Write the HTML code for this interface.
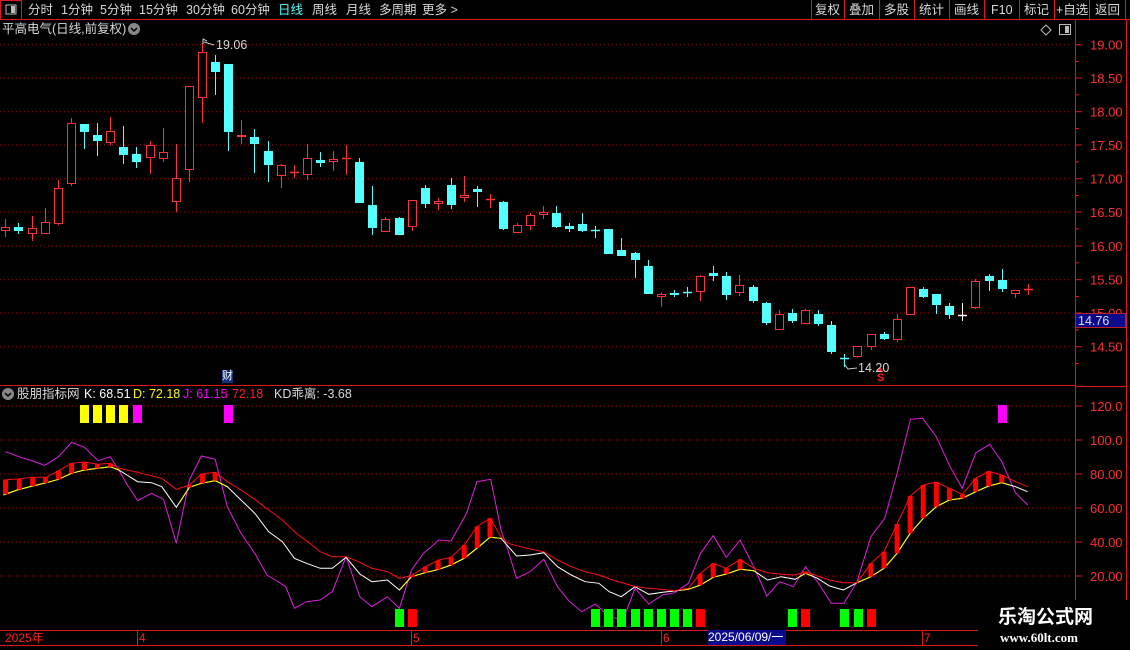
<!DOCTYPE html>
<html><head><meta charset="utf-8">
<style>
html,body{margin:0;padding:0;background:#000;}
body{width:1130px;height:650px;overflow:hidden;position:relative;font-family:"Liberation Sans","Noto Sans CJK SC",sans-serif;}
.t{position:absolute;white-space:nowrap;font-size:12.5px;line-height:14px;}
</style></head>
<body>
<svg id="s" width="1130" height="650" style="position:absolute;left:0;top:0" xmlns="http://www.w3.org/2000/svg"></svg>
<div class="t" style="left:28px;top:3px;color:#d8d8d8">分时</div>
<div class="t" style="left:61px;top:3px;color:#d8d8d8">1分钟</div>
<div class="t" style="left:100px;top:3px;color:#d8d8d8">5分钟</div>
<div class="t" style="left:139px;top:3px;color:#d8d8d8">15分钟</div>
<div class="t" style="left:186px;top:3px;color:#d8d8d8">30分钟</div>
<div class="t" style="left:231px;top:3px;color:#d8d8d8">60分钟</div>
<div class="t" style="left:278px;top:3px;color:#54ffff">日线</div>
<div class="t" style="left:312px;top:3px;color:#d8d8d8">周线</div>
<div class="t" style="left:346px;top:3px;color:#d8d8d8">月线</div>
<div class="t" style="left:379px;top:3px;color:#d8d8d8">多周期</div>
<div class="t" style="left:422px;top:3px;color:#d8d8d8">更多 &gt;</div>
<div class="t" style="left:815px;top:3px;color:#d8d8d8">复权</div>
<div class="t" style="left:849px;top:3px;color:#d8d8d8">叠加</div>
<div class="t" style="left:884px;top:3px;color:#d8d8d8">多股</div>
<div class="t" style="left:919px;top:3px;color:#d8d8d8">统计</div>
<div class="t" style="left:954px;top:3px;color:#d8d8d8">画线</div>
<div class="t" style="left:991px;top:3px;color:#d8d8d8">F10</div>
<div class="t" style="left:1024px;top:3px;color:#d8d8d8">标记</div>
<div class="t" style="left:1056px;top:3px;color:#d8d8d8">+自选</div>
<div class="t" style="left:1095px;top:3px;color:#d8d8d8">返回</div>
<div class="t" style="left:2px;top:22px;color:#d8d8d8">平高电气(日线,前复权)</div>
<div class="t" style="left:17px;top:387px;color:#d8d8d8">股朋指标网</div>
<div class="t" style="left:84px;top:387px;color:#fff">K: 68.51</div>
<div class="t" style="left:133px;top:387px;color:#ffff00">D: 72.18</div>
<div class="t" style="left:183px;top:387px;color:#ff00ff">J: 61.15</div>
<div class="t" style="left:225px;top:387px;color:#ff2020">: 72.18</div>
<div class="t" style="left:274px;top:387px;color:#d8d8d8">KD乖离: -3.68</div>
<div class="t" style="left:216px;top:38px;color:#d8d8d8">19.06</div>
<div class="t" style="left:858px;top:361px;color:#d8d8d8">14.20</div>
<div class="t" style="left:877px;top:371px;color:#ff2020;font-size:11px;font-weight:bold">S</div>
<div class="t" style="left:222px;top:370px;color:#fff;background:#10307a;font-size:11px;line-height:13px">财</div>
<div class="t" style="left:5px;top:631px;color:#ff2020;font-size:12px">2025年</div>
<div class="t" style="left:139px;top:631px;color:#ff2020;font-size:12px">4</div>
<div class="t" style="left:413px;top:631px;color:#ff2020;font-size:12px">5</div>
<div class="t" style="left:663px;top:631px;color:#ff2020;font-size:12px">6</div>
<div class="t" style="left:924px;top:631px;color:#ff2020;font-size:12px">7</div>
<div class="t" style="left:708px;top:630px;width:78px;height:15px;color:#fff;background:#0a0a8c;font-size:12px;line-height:15px">2025/06/09/一</div>
<div class="t" style="left:978px;top:600px;width:152px;height:50px;background:#000"></div>
<div class="t" style="left:998px;top:607px;color:#fff;font-size:19px;line-height:22px;font-weight:bold">乐淘公式网</div>
<div class="t" style="left:1000px;top:631px;color:#fff;font-size:13px;font-family:'Liberation Serif',serif;font-weight:bold">www.60lt.com</div>
<div class="t" style="left:1075px;top:313px;width:51px;height:15px;background:#0a0a8c;border:1px solid #c02020;box-sizing:border-box;color:#ddd;font-size:12.5px;line-height:14px;padding-left:2px">14.76</div>
<script>
var s=document.getElementById('s');var h='';
function L(x1,y1,x2,y2,c,w,d){h+='<line x1="'+x1+'" y1="'+y1+'" x2="'+x2+'" y2="'+y2+'" stroke="'+c+'" stroke-width="'+(w||1)+'"'+(d?' stroke-dasharray="'+d+'"':'')+'/>';}
function R(x,y,w,hh,f,st){h+='<rect x="'+x+'" y="'+y+'" width="'+w+'" height="'+hh+'" fill="'+(f||'none')+'"'+(st?' stroke="'+st+'"':'')+'/>';}
function T(x,y,t,c){h+='<text x="'+x+'" y="'+y+'" fill="'+c+'" font-size="13" font-family="Liberation Sans,sans-serif">'+t+'</text>';}
var RED='#e01818';
// toolbar
L(0,19.5,1130,19.5,RED);R(0.5,0.5,21,19,null,RED);R(6,5,10,9,'none','#bbb');R(11,6,4,7,'#bbb');
[811,844,879,914,949,984,1019,1054,1089,1125].forEach(function(x){L(x+.5,0,x+.5,19,RED);});
// title icon
h+='<circle cx="134" cy="29" r="6" fill="#888"/><path d="M131 28 L134 31 L137 28" stroke="#000" stroke-width="1.5" fill="none"/>';
h+='<path d="M1046 25 L1051 30 L1046 35 L1041 30 Z" stroke="#bbb" fill="none"/>';R(1059.5,24.5,11,10,'none','#bbb');R(1065,26,4,7,'#bbb');
h+='<circle cx="8" cy="394" r="6" fill="#888"/><path d="M5 393 L8 396 L11 393" stroke="#000" stroke-width="1.5" fill="none"/>';
// axes
L(1075.5,19,1075.5,650,RED);L(1126.5,19,1126.5,650,RED);
L(0,385.5,1075,385.5,RED);L(1075,386.5,1127,386.5,RED);
L(0,630.5,978,630.5,RED);L(0,645.5,978,645.5,RED);
[137,411,661,922].forEach(function(x){L(x+.5,630,x+.5,645,RED);});
var gy=[44.7,78,111.7,145,178.7,212,246,279.7,313,346.7],gl=['19.00','18.50','18.00','17.50','17.00','16.50','16.00','15.50','15.00','14.50'];
gy.forEach(function(y,i){L(0,y,1072,y,'#a01010',1,'1,3');L(1076,y,1082,y,RED);T(1090,y+5,gl[i],'#ff3030');L(1076,y+16.8,1079,y+16.8,RED);});
var iy=[406,440,474,508,542,576],il=['120.0','100.0','80.00','60.00','40.00','20.00'];
iy.forEach(function(y,i){L(0,y,1072,y,'#a01010',1,'1,3');L(1076,y,1082,y,RED);T(1090,y+5,il[i],'#ff3030');});
// candles
var C=[['r',227,231,219,237],['c',227,231,223,234],['r',228,234,216,241],['r',222,234,208,234],['r',188,224,180,225],['r',123,184,118,186],['c',124,132,124,149],['c',135,141,123,156],['r',131,143,117,145],['c',147,155,126,164],['c',154,162,147,168],['r',145,158,141,174],['r',152,159,128,162],['r',178,202,144,212],['r',86,170,86,182],['r',52,98,43,123],['c',62,72,55,95],['c',64,132,64,151],['r',135,137,120,144],['c',137,144,129,173],['c',151,165,141,182],['r',165,176,164,188],['r',172,173,165,178],['r',158,175,144,180],['c',160,163,152,167],['r',159,162,151,171],['r',158,159,145,175],['c',162,203,158,203],['c',205,228,186,235],['r',219,232,217,232],['c',218,235,217,235],['r',200,227,200,231],['c',188,204,185,208],['r',201,204,198,210],['c',185,205,178,209],['r',195,198,176,202],['c',189,192,186,207],['r',199,200,194,208],['c',202,229,201,230],['r',225,233,223,233],['r',215,226,213,230],['r',212,215,206,219],['c',213,227,206,228],['c',226,229,223,232],['c',224,231,213,232],['c',230,231,226,238],['c',229,254,229,254],['c',250,256,238,256],['c',253,260,252,278],['c',266,294,260,294],['r',294,297,292,307],['c',293,295,290,297],['c',292,293,287,297],['r',276,292,275,301],['c',273,276,266,281],['c',276,295,272,300],['r',285,293,275,296],['c',287,301,285,303],['c',303,323,302,325],['r',314,330,310,330],['c',313,321,309,323],['r',310,324,309,324],['c',314,324,310,326],['c',325,352,321,354],['c',358,359,354,367],['r',346,357,346,358],['r',334,347,334,350],['c',334,339,332,340],['r',319,340,314,342],['r',287,315,287,315],['c',289,297,287,298],['c',294,305,294,314],['c',306,315,303,319],['w',315,316,303,321],['r',281,308,279,309],['c',276,281,274,291],['c',280,289,269,292],['r',290,294,290,298],['r',289,290,284,295]];
C.forEach(function(c,i){var x=Math.round(5.3+13.11*i);var col=c[0]=='r'?'#ff3232':(c[0]=='c'?'#54ffff':'#ffffff');
 L(x+.5,c[3],x+.5,c[4],col);
 var hh=c[2]-c[1];
 if(hh<=1){L(x-4,c[1]+.5,x+5,c[1]+.5,col,1.5);}
 else if(c[0]=='r'){R(x-3.5,c[1]+.5,8,hh-1,'#000',col);}
 else R(x-4,c[1],9,hh,col);
});
// annotations
h+='<path d="M203 44 L203 39 L207 41 M204 42 L214 45" stroke="#ccc" fill="none"/>';
h+='<path d="M845 365 L848 369 L857 368" stroke="#ccc" fill="none"/>';
h+='<path d="M877 372 L880 368 L883 372" stroke="#ff2020" fill="#ff2020"/>';
// indicator data
function m8(a){return a.map(function(p){return [p[0]/2.904,400+p[1]/3];}).filter(function(p){return p[0]<531;});}
function m9(a){return a.map(function(p){return [530+p[0]/2.904,400+p[1]/3];});}
var M=m8([[16,155],[60,172],[95,183],[130,196],[170,170],[208,127],[245,142],[285,182],[320,170],[345,210],[370,255],[400,302],[440,280],[475,298],[512,430],[550,240],[585,168],[625,178],[660,320],[700,400],[740,460],[775,525],[800,540],[830,560],[855,625],[890,605],[930,600],[965,575],[1005,470],[1045,590],[1080,620],[1125,590],[1160,625],[1195,510],[1230,460],[1275,420],[1310,423],[1355,340],[1385,245],[1425,238],[1455,390],[1475,450],[1500,535]]).concat(m9([[0,515],[40,478],[80,560],[115,605],[150,635],[190,612],[230,650],[270,660],[305,565],[345,612],[385,585],[420,578],[460,550],[495,460],[532,407],[570,472],[610,420],[650,500],[688,588],[725,545],[765,560],[800,500],[838,550],[875,610],[912,610],[950,545],[990,410],[1030,355],[1065,225],[1105,58],[1140,55],[1180,110],[1220,200],[1255,265],[1295,158],[1335,133],[1370,185],[1410,278],[1445,315]]));
var U=m8([[10,240],[50,237],[95,232],[135,232],[170,212],[208,190],[245,186],[285,193],[320,190],[345,205],[400,217],[470,235],[512,268],[550,255],[585,222],[625,217],[660,245],[700,270],[740,298],[780,330],[820,360],[860,400],[900,430],[930,455],[965,470],[1005,470],[1045,487],[1080,505],[1125,515],[1160,535],[1195,527],[1235,500],[1275,480],[1310,472],[1348,435],[1385,380],[1423,355],[1455,410],[1475,430],[1500,437]]).concat(m9([[0,447],[40,455],[80,480],[120,500],[160,515],[200,525],[240,540],[300,558],[340,565],[380,568],[420,572],[460,565],[495,520],[532,490],[570,505],[610,478],[650,505],[690,518],[730,523],[770,525],[800,515],[835,528],[870,540],[910,548],[950,548],[990,490],[1028,455],[1066,372],[1104,288],[1142,255],[1180,246],[1218,265],[1256,283],[1294,235],[1332,214],[1370,225],[1410,245],[1445,260]]));
var D=m8([[10,285],[50,270],[95,258],[135,248],[170,238],[208,220],[245,210],[285,205],[320,200],[345,210],[400,245],[440,248],[470,260],[512,322],[550,262],[585,250],[625,242],[660,260],[700,300],[740,340],[780,395],[820,425],[855,475],[890,490],[930,505],[965,505],[1005,472],[1045,522],[1080,545],[1125,540],[1160,570],[1195,530],[1235,518],[1275,508],[1310,495],[1348,475],[1385,445],[1423,412],[1455,415],[1500,468]]).concat(m9([[0,465],[40,458],[80,500],[120,525],[160,545],[200,550],[230,575],[265,590],[305,560],[345,583],[385,577],[420,573],[460,568],[495,555],[532,532],[570,522],[610,508],[650,512],[690,540],[730,530],[770,538],[800,520],[835,535],[870,558],[910,570],[950,548],[990,530],[1028,505],[1066,460],[1104,400],[1142,355],[1180,320],[1218,300],[1256,295],[1294,275],[1332,258],[1370,248],[1410,260],[1445,275]]));
function pl(a,c){return '<polyline fill="none" stroke="'+c+'" stroke-width="1" points="'+a.map(function(p){return p[0].toFixed(1)+','+p[1].toFixed(1);}).join(' ')+'"/>';}
function itp(a,x){for(var i=1;i<a.length;i++){if(a[i][0]>=x){var p=a[i-1],q=a[i];var t=(x-p[0])/(q[0]-p[0]||1);return p[1]+t*(q[1]-p[1]);}}return a[a.length-1][1];}
h+='<defs><clipPath id="up"><rect x="0" y="380" width="120" height="250"/><rect x="180" y="380" width="48" height="250"/><rect x="400" y="380" width="102" height="250"/><rect x="681" y="380" width="75" height="250"/><rect x="798" y="380" width="14" height="250"/><rect x="855" y="380" width="154" height="250"/></clipPath></defs>';
h+=pl(M,'#e020e0');
h+=pl(D,'#ffffff');
h+='<g clip-path="url(#up)">'+pl(D,'#ffff00')+'</g>';
var bx=[16,56,95,132,170,208,245,283,321,550,588,625,1197,1235,1272,1310,1348,1386,1423].map(function(v){return v/2.904;}).concat([494,532,570,610,800,990,1028,1066,1104,1142,1180,1218,1256,1294,1332,1370].map(function(v){return 530+v/2.904;}));
bx.forEach(function(x){var a=itp(U,x),b=itp(D,x);var t=Math.min(a,b),bb=Math.max(a,b);R(x-2.5,t,5,Math.max(bb-t,2),'#ff0000');});
h+=pl(U,'#ff1010');
// signal bars
[[80,'#ffff00'],[93,'#ffff00'],[106,'#ffff00'],[119,'#ffff00'],[133,'#ff00ff'],[224,'#ff00ff'],[998,'#ff00ff']].forEach(function(b){R(b[0],405,9,18,b[1]);});
[[395,'#00ff00'],[408,'#ff0000'],[591,'#00ff00'],[604,'#00ff00'],[617,'#00ff00'],[631,'#00ff00'],[644,'#00ff00'],[657,'#00ff00'],[670,'#00ff00'],[683,'#00ff00'],[696,'#ff0000'],[788,'#00ff00'],[801,'#ff0000'],[840,'#00ff00'],[854,'#00ff00'],[867,'#ff0000']].forEach(function(b){R(b[0],609,9,18,b[1]);});
s.innerHTML=h;
</script>
</body></html>
